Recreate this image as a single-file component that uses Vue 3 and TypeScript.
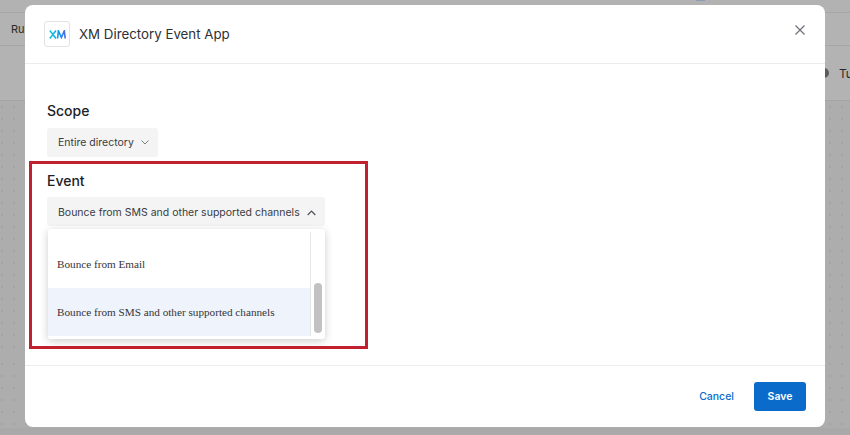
<script setup lang="ts">
const items: { label: string; selected: boolean }[] = [
  { label: 'Bounce from Email', selected: false },
  { label: 'Bounce from SMS and other supported channels', selected: true },
]
</script>

<template>
  <div class="page">
    <div class="backdrop">
      <div class="bar-top"><span class="tick"></span></div>
      <div class="bar-nav"><span class="ru">Ru</span></div>
      <div class="bar-tools"><span class="tu"><i class="knob"></i>Tu</span></div>
      <div class="canvas canvas-a"></div>
      <div class="canvas canvas-b"></div>
      <div class="bottom-strip"></div>
    </div>

    <div class="modal">
      <header class="head">
        <div class="logo">
          <svg width="17" height="9" viewBox="0 0 17 9">
            <defs>
              <linearGradient id="xm" x1="0" y1="0" x2="1" y2="0">
                <stop offset="0" stop-color="#14c8d8" />
                <stop offset="0.55" stop-color="#0b9df0" />
                <stop offset="1" stop-color="#4a6ae8" />
              </linearGradient>
            </defs>
            <path d="M0.8 0.5 L7 8.5 M7 0.5 L0.8 8.5 M8.6 8.5 L9.4 0.8 L12.4 7.6 L15.3 0.8 L16.2 8.5" fill="none" stroke="url(#xm)" stroke-width="1.6" />
          </svg>
        </div>
        <h1 class="title">XM Directory Event App</h1>
        <svg class="close" width="10" height="10" viewBox="0 0 10 10">
          <path d="M0.5 0.5 L9.5 9.5 M9.5 0.5 L0.5 9.5" stroke="#6b6f76" stroke-width="1.2" fill="none" />
        </svg>
      </header>

      <main class="body">
        <section class="scope">
          <h2 class="label">Scope</h2>
          <button class="select">
            Entire directory
            <svg width="8" height="5" viewBox="0 0 8 5"><path d="M0.5 0.5 L4 4 L7.5 0.5" fill="none" stroke="#7b7f86" stroke-width="1" /></svg>
          </button>
        </section>
        <section class="event">
          <h2 class="label">Event</h2>
          <button class="select open">
            Bounce from SMS and other supported channels
            <svg width="9" height="6" viewBox="0 0 9 6"><path d="M0.7 5 L4.5 1.2 L8.3 5" fill="none" stroke="#4d5056" stroke-width="1.2" /></svg>
          </button>
          <div class="menu">
            <ul class="list">
              <li v-for="item in items" :key="item.label" class="item" :class="{ selected: item.selected }">{{ item.label }}</li>
            </ul>
            <div class="track"><div class="thumb"></div></div>
          </div>
          <div class="highlight"></div>
        </section>
      </main>

      <footer class="foot">
        <a class="cancel">Cancel</a>
        <button class="save">Save</button>
      </footer>
    </div>
  </div>
</template>

<style>
html, body { margin: 0; padding: 0; background: #adadad; overflow: hidden; }
</style>

<style scoped>
.page {
  position: relative;
  width: 850px;
  height: 435px;
  overflow: hidden;
  font-family: Inter, "Liberation Sans", sans-serif;
}
.backdrop {
  width: 100%;
  height: 100%;
  display: flex;
  flex-direction: column;
  background: #adadad;
}
.bar-top {
  height: 12px;
  border-bottom: 1px solid #a6a6a6;
  background: #b2b2b2;
  position: relative;
  flex: none;
}
.tick {
  position: absolute;
  left: 696px;
  top: 0;
  width: 9px;
  height: 1px;
  background: #8c9cb8;
}
.bar-nav {
  height: 32px;
  flex: none;
  border-bottom: 1px solid #a6a6a6;
  background: #b3b3b3;
  display: flex;
  align-items: center;
  font-size: 11px;
  color: #2a2a2a;
}
.bar-tools {
  height: 54px;
  flex: none;
  border-bottom: 1px solid #a4a4a4;
  background: #b3b3b3;
  display: flex;
  justify-content: flex-end;
  align-items: center;
  color: #2a2a2a;
}
.ru { padding-left: 11px; }
.tu {
  display: flex;
  align-items: center;
  gap: 10px;
  width: 31px;
  font-size: 12px;
  white-space: nowrap;
}
.knob {
  width: 10px;
  height: 10px;
  border-radius: 50%;
  background: #5b5b5b;
  flex: none;
}
.canvas {
  background-color: #adadad;
  background-image: radial-gradient(circle, #a4a4a4 1px, transparent 1.4px);
  background-size: 12px 12px;
  flex: none;
}
.canvas-a {
  height: 254px;
  background-position: -4px 0;
}
.canvas-b {
  height: 73px;
  background-position: -4px 3px;
}
.bottom-strip {
  flex: 1;
  background: #a9a9a9;
}
.modal {
  position: absolute;
  left: 25px;
  top: 5px;
  width: 800px;
  height: 422px;
  background: #fff;
  border-radius: 8px;
  display: flex;
  flex-direction: column;
}
.head {
  height: 58px;
  flex: none;
  display: flex;
  align-items: center;
  gap: 9px;
  padding: 0 20px 0 19px;
  border-bottom: 1px solid #ececec;
}
.logo {
  width: 24px;
  height: 24px;
  border: 1px solid #e3e3e3;
  border-radius: 3px;
  display: flex;
  align-items: center;
  justify-content: center;
}
.title {
  flex: 1;
  margin: 0;
  font-size: 13.3px;
  font-weight: 400;
  color: #2e3035;
}
.close { margin-top: -8px; }
.body {
  flex: 1;
  padding: 38px 22px 0;
  display: flex;
  flex-direction: column;
}
.label {
  margin: 0 0 9px;
  font-size: 14px;
  line-height: 17px;
  font-weight: 500;
  color: #202226;
}
.select {
  display: flex;
  align-items: center;
  gap: 7px;
  height: 29px;
  padding: 0 9px 0 11px;
  border: 0;
  border-radius: 3px;
  background: #f4f4f5;
  font-family: inherit;
  font-size: 10.5px;
  color: #3a3c41;
}
.scope { margin-bottom: 15px; }
.event { position: relative; }
.event .label { margin-bottom: 8px; }
.select.open { padding-top: 2px; }
.menu {
  position: absolute;
  left: 1px;
  top: 57px;
  width: 277px;
  height: 110px;
  background: #fff;
  border-radius: 3px;
  box-shadow: 0 2px 8px rgba(0, 0, 0, 0.2);
  display: flex;
  padding: 3px 0;
  box-sizing: border-box;
}
.list {
  list-style: none;
  margin: 0;
  padding: 0;
  flex: 1;
  display: flex;
  flex-direction: column;
  justify-content: flex-end;
}
.item {
  height: 48px;
  display: flex;
  align-items: center;
  padding-left: 9px;
  font-family: "Liberation Serif", serif;
  font-size: 11.2px;
  color: #33353a;
}
.item.selected { background: #eff3fb; }
.track {
  width: 14px;
  border-left: 1px solid #e6e6e6;
  position: relative;
}
.thumb {
  position: absolute;
  left: 3px;
  bottom: 3px;
  width: 8px;
  height: 50px;
  border-radius: 4px;
  background: #c2c2c2;
}
.highlight {
  position: absolute;
  left: -18px;
  top: -11px;
  width: 339px;
  height: 188px;
  box-sizing: border-box;
  border: 3px solid #c0202f;
  pointer-events: none;
}
.foot {
  height: 62px;
  flex: none;
  box-sizing: border-box;
  border-top: 1px solid #ececec;
  display: flex;
  align-items: center;
  justify-content: flex-end;
  gap: 20px;
  padding: 0 19px 0 0;
}
.cancel {
  font-size: 10.5px;
  font-weight: 500;
  color: #0b6bcb;
}
.save {
  width: 52px;
  height: 29px;
  border: 0;
  border-radius: 3px;
  background: #0b6bcb;
  color: #fff;
  font-family: inherit;
  font-size: 10.5px;
  font-weight: 600;
}
</style>
